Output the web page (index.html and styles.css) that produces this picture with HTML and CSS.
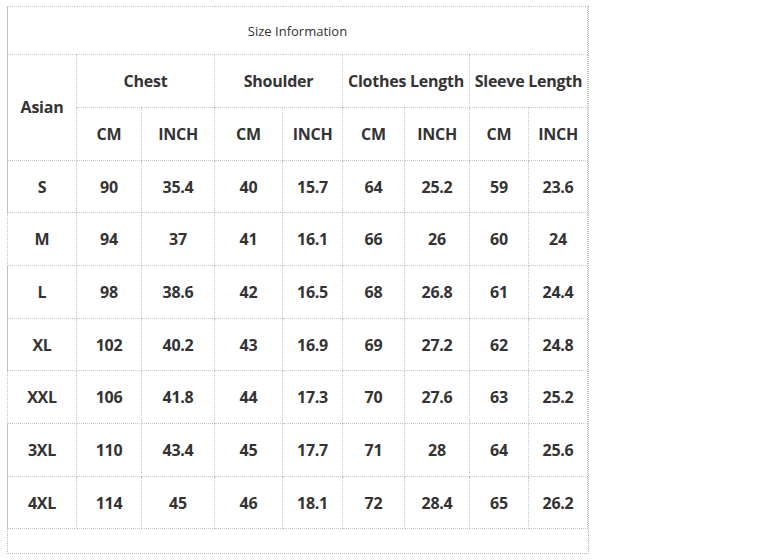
FILE: index.html
```html
<!DOCTYPE html>
<html>
<head>
<meta charset="utf-8">
<link rel="stylesheet" href="styles.css">
</head>
<body>
<div class="wrap">
<table class="size">
  <colgroup>
    <col class="c0"><col class="c1"><col class="c2"><col class="c3"><col class="c4"><col class="c5"><col class="c6"><col class="c7"><col class="c8">
  </colgroup>
  <tr class="title"><td colspan="9">Size Information</td></tr>
  <tr class="head"><th rowspan="2">Asian</th><th colspan="2">Chest</th><th colspan="2">Shoulder</th><th colspan="2">Clothes Length</th><th colspan="2">Sleeve Length</th></tr>
  <tr class="head"><th>CM</th><th>INCH</th><th>CM</th><th>INCH</th><th>CM</th><th>INCH</th><th>CM</th><th>INCH</th></tr>
  <tr><td>S</td><td>90</td><td>35.4</td><td>40</td><td>15.7</td><td>64</td><td>25.2</td><td>59</td><td>23.6</td></tr>
  <tr><td>M</td><td>94</td><td>37</td><td>41</td><td>16.1</td><td>66</td><td>26</td><td>60</td><td>24</td></tr>
  <tr><td>L</td><td>98</td><td>38.6</td><td>42</td><td>16.5</td><td>68</td><td>26.8</td><td>61</td><td>24.4</td></tr>
  <tr><td>XL</td><td>102</td><td>40.2</td><td>43</td><td>16.9</td><td>69</td><td>27.2</td><td>62</td><td>24.8</td></tr>
  <tr><td>XXL</td><td>106</td><td>41.8</td><td>44</td><td>17.3</td><td>70</td><td>27.6</td><td>63</td><td>25.2</td></tr>
  <tr><td>3XL</td><td>110</td><td>43.4</td><td>45</td><td>17.7</td><td>71</td><td>28</td><td>64</td><td>25.6</td></tr>
  <tr><td>4XL</td><td>114</td><td>45</td><td>46</td><td>18.1</td><td>72</td><td>28.4</td><td>65</td><td>26.2</td></tr>
</table>
<div class="foot"></div>
</div>
</body>
</html>
```
FILE: styles.css
```css
html, body {
  margin: 0;
  padding: 0;
  background: #fff;
}
body {
  padding: 6px 0 0 7px;
  font-family: "Open Sans", "Noto Sans", sans-serif;
  color: #333;
}
.wrap {
  width: 580px;
  border: 1px dotted #bbb;
  border-top: none;
}
.size {
  border-collapse: collapse;
  table-layout: fixed;
  width: 580px;
  margin-left: -1px;
  margin-right: -1px;
}
.c0 { width: 69px; }
.c1 { width: 65px; }
.c2 { width: 73px; }
.c3 { width: 68px; }
.c4 { width: 60px; }
.c5 { width: 62px; }
.c6 { width: 65px; }
.c7 { width: 59px; }
.c8 { width: 59px; }
.size td, .size th {
  border: 1px dotted #c4c4c4;
  text-align: center;
  padding: 0;
  height: 51.7px;
  font-size: 16px;
  font-weight: 700;
  letter-spacing: -0.25px;
  white-space: nowrap;
  overflow: hidden;
}
.size .title td {
  height: 47.3px;
  font-size: 13px;
  font-weight: 400;
  letter-spacing: 0;
}
.foot {
  height: 24px;
}
```
